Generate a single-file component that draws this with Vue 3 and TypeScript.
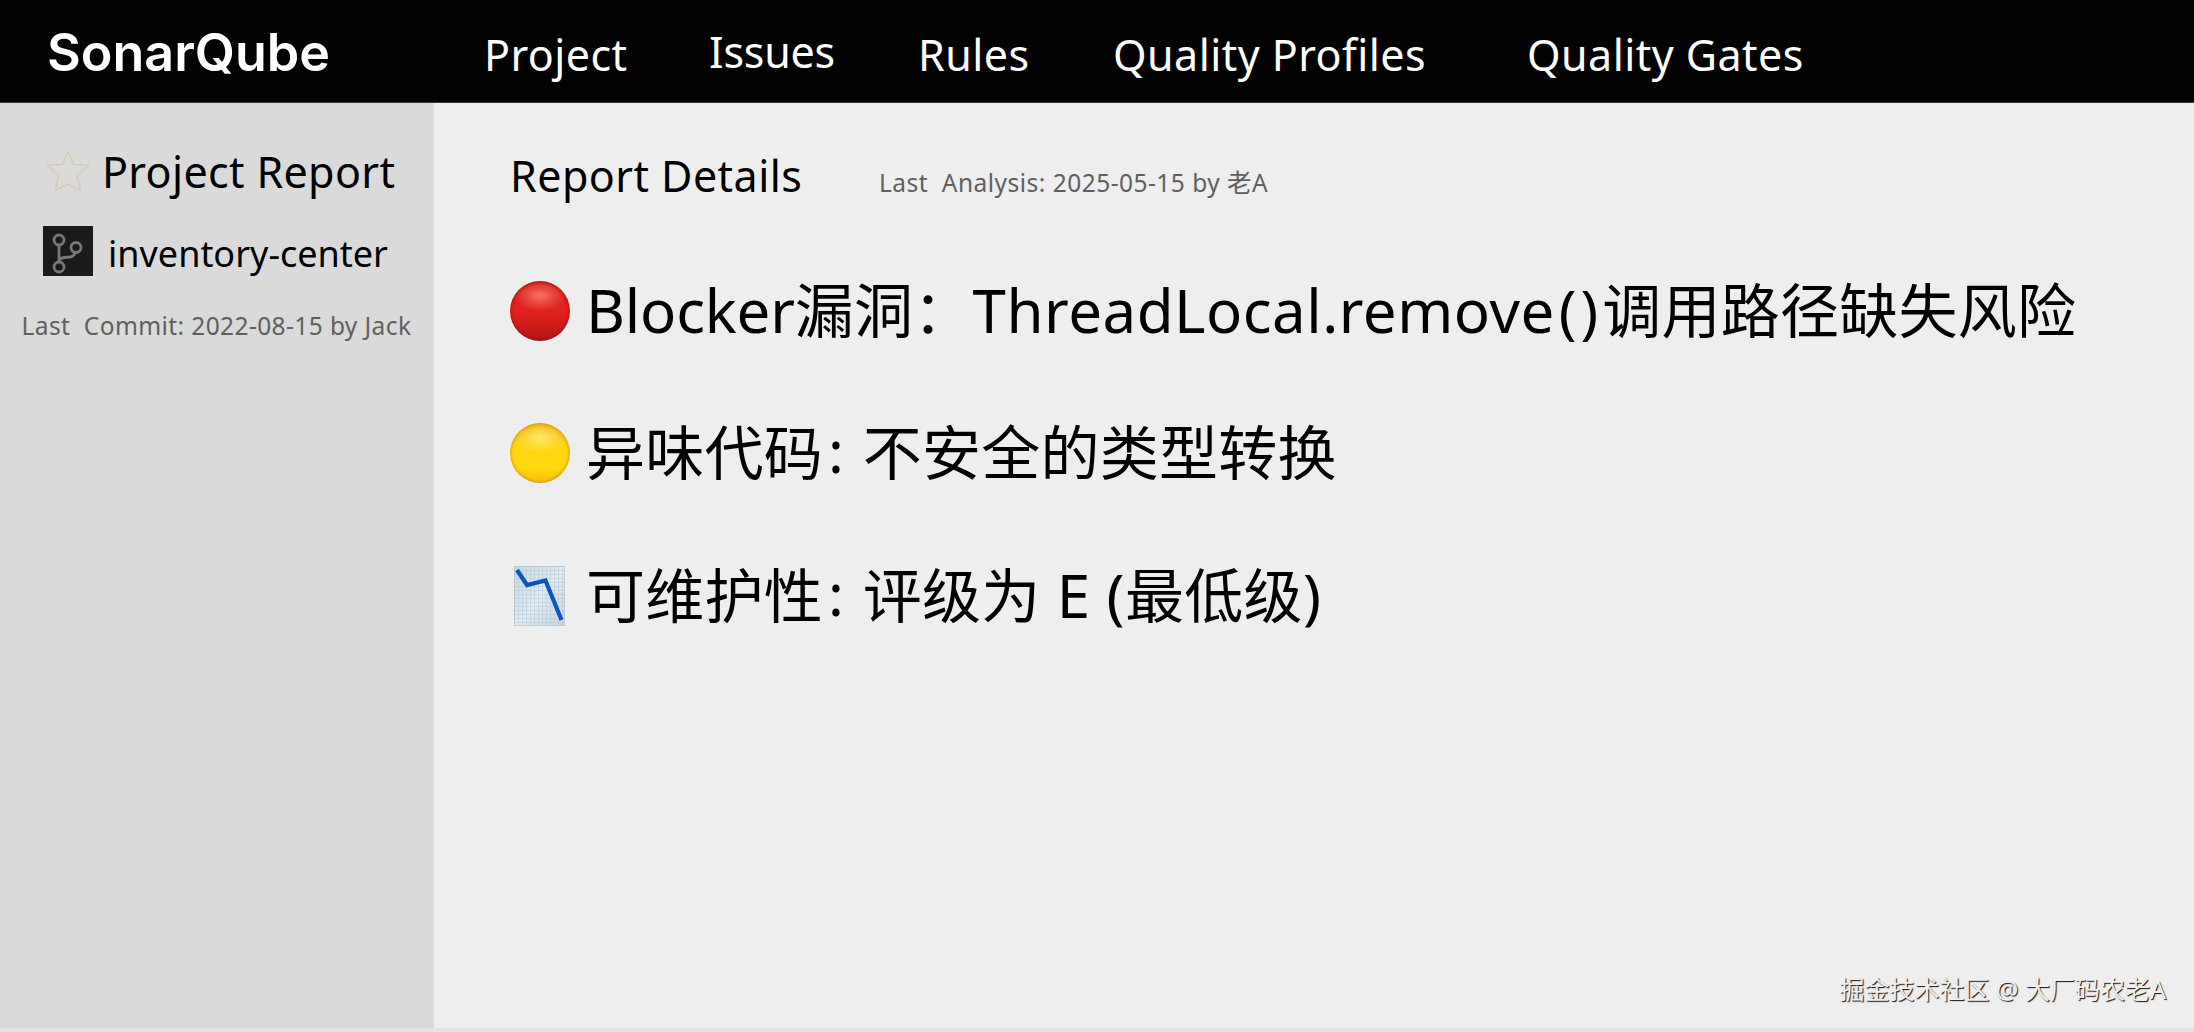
<script setup lang="ts">
import { ref } from 'vue'

interface NavItem {
  label: string
  key: string
}

interface Segment {
  kind: 'cjk' | 'latin' | 'parens' | 'colon'
  text: string
}

interface Finding {
  icon: 'red' | 'yellow' | 'chart'
  parts: Segment[]
}

const navItems: NavItem[] = [
  { key: 'project', label: 'Project' },
  { key: 'issues', label: 'Issues' },
  { key: 'rules', label: 'Rules' },
  { key: 'profiles', label: 'Quality Profiles' },
  { key: 'gates', label: 'Quality Gates' },
]

// Latin and Chinese runs are spaced differently
const findings: Finding[] = [
  {
    icon: 'red',
    parts: [
      { kind: 'latin', text: 'Blocker' },
      { kind: 'cjk', text: '漏洞：' },
      { kind: 'latin', text: 'ThreadLocal.remove' },
      { kind: 'parens', text: '()' },
      { kind: 'cjk', text: '调用路径缺失风险' },
    ],
  },
  {
    icon: 'yellow',
    parts: [
      { kind: 'cjk', text: '异味代码' },
      { kind: 'colon', text: ': ' },
      { kind: 'cjk', text: '不安全的类型转换' },
    ],
  },
  {
    icon: 'chart',
    parts: [
      { kind: 'cjk', text: '可维护性' },
      { kind: 'colon', text: ': ' },
      { kind: 'cjk', text: '评级为' },
      { kind: 'latin', text: ' E (' },
      { kind: 'cjk', text: '最低级' },
      { kind: 'latin', text: ')' },
    ],
  },
]

const active = ref('project')
</script>

<template>
  <div class="page">
    <header class="topbar">
      <div class="logo">SonarQube</div>
      <nav class="nav">
        <a
          v-for="item in navItems"
          :key="item.key"
          class="nav-item"
          :class="item.key"
          @click="active = item.key"
          ><span>{{ item.label }}</span></a
        >
      </nav>
    </header>

    <div class="body">
      <aside class="sidebar">
        <div class="side-row report">
          <svg class="star" viewBox="0 0 44 42">
            <path
              d="M22 1.5 L27.6 14.3 L43 15.4 L31.2 25.8 L34.6 40.5 L21.3 34.4 L9.6 40.5 L12.4 25.8 L1 15.4 L16.6 14.3 Z"
            />
          </svg>
          <span class="report-title">Project Report</span>
        </div>
        <div class="side-row repo">
          <svg class="branch" viewBox="0 0 50 50">
            <rect width="50" height="50" fill="#1b1b1b" />
            <g fill="none" stroke="#777" stroke-width="2.8">
              <circle cx="16" cy="14" r="5" />
              <circle cx="33" cy="21.5" r="5" />
              <circle cx="16" cy="41" r="5" />
              <path d="M16 19 V36 M16 35 Q17 32 21 31.5 L27 31 Q31 30.5 32 26.5" />
            </g>
          </svg>
          <span class="repo-name">inventory-center</span>
        </div>
        <div class="commit">Last&nbsp; Commit: 2022-08-15 by Jack</div>
      </aside>

      <main class="content">
        <div class="heading">
          <h1>Report Details</h1>
          <span class="analysis">Last&nbsp; Analysis: 2025-05-15 by 老A</span>
        </div>

        <div v-for="f in findings" :key="f.icon" class="finding" :class="'row-' + f.icon">
          <span v-if="f.icon !== 'chart'" class="ball" :class="f.icon"></span>
          <svg v-else class="chart" viewBox="0 0 51 60">
            <defs>
              <linearGradient id="paper" x1="0" y1="0" x2="1" y2="1">
                <stop offset="0" stop-color="#c3d9e5" />
                <stop offset="0.5" stop-color="#e0eaf1" />
                <stop offset="1" stop-color="#c9d5e0" />
              </linearGradient>
              <pattern id="grid" width="4" height="4" patternUnits="userSpaceOnUse">
                <path d="M0 0.5 H4 M0.5 0 V4" stroke="#a9c0cf" stroke-opacity="0.6" stroke-width="0.6" />
              </pattern>
            </defs>
            <rect width="51" height="60" rx="1" fill="url(#paper)" />
            <rect width="51" height="60" rx="1" fill="url(#grid)" stroke="#b3bcc2" />
            <path class="trend" d="M3 4 L13 19 L31.5 14.5 L47.5 54" />
          </svg>
          <span class="finding-text"
            ><span v-for="(part, i) in f.parts" :key="i" :class="part.kind">{{ part.text }}</span></span
          >
        </div>

        <div class="watermark">掘金技术社区 @ 大厂码农老A</div>
      </main>
    </div>
    <footer class="strip"></footer>
  </div>
</template>

<style>
body {
  margin: 0;
}
</style>

<style scoped>
.page {
  display: flex;
  flex-direction: column;
  width: 100%;
  height: 100vh;
  overflow: hidden;
  background: #eeeeee;
  color: #000;
  font-family: 'Noto Sans', 'Noto Sans CJK SC', sans-serif;
  white-space: nowrap;
}

.topbar {
  display: flex;
  align-items: flex-start;
  height: 102px;
  flex-shrink: 0;
  background: #020202;
  border-bottom: 1px solid #3a3a3a;
  box-sizing: content-box;
  color: #fff;
}

.logo {
  width: 437px;
  padding: 23px 0 0 47px;
  box-sizing: content-box;
  font-family: Inter, 'Liberation Sans', sans-serif;
  font-size: 52px;
  font-weight: 600;
  line-height: 60px;
}

.nav {
  display: grid;
  grid-template-columns: 225px 209px 195px 414px auto;
  padding-top: 25px;
  font-size: 43px;
  line-height: 60px;
  letter-spacing: 0.45px;
}

.nav-item {
  cursor: pointer;
}

.nav-item.issues {
  margin-top: -3px;
  letter-spacing: -0.2px;
}

.body {
  display: flex;
  flex: 1;
  min-height: 0;
}

.sidebar {
  width: 434px;
  flex-shrink: 0;
  box-sizing: border-box;
  padding-top: 38px;
  background: #dadada;
}

.side-row {
  display: flex;
  align-items: center;
}

.report {
  height: 60px;
  padding-left: 46px;
}

.star {
  width: 44px;
  height: 42px;
}

.star path {
  fill: none;
  stroke: #dac49a;
  stroke-width: 1;
}

.report-title {
  margin-left: 12px;
  padding-top: 2px;
  font-size: 43px;
  line-height: 60px;
  letter-spacing: 0.35px;
}

.repo {
  height: 50px;
  margin-top: 25px;
  padding-left: 43px;
}

.branch {
  width: 50px;
  height: 50px;
}

.repo-name {
  margin-left: 15px;
  padding-top: 6px;
  font-size: 36px;
  line-height: 50px;
}

.commit {
  margin-top: 30px;
  padding-left: 21.5px;
  color: #606060;
  font-size: 24.5px;
  line-height: 40px;
  letter-spacing: 0.4px;
}

.content {
  flex: 1;
  display: flex;
  flex-direction: column;
  align-items: flex-start;
  padding: 43px 28px 0 76px;
}

.heading {
  display: flex;
  align-items: baseline;
  height: 60px;
}

h1 {
  margin: 0;
  width: 369px;
  font-size: 43px;
  font-weight: 400;
  line-height: 60px;
  letter-spacing: 0.45px;
}

.analysis {
  color: #606060;
  font-size: 24.5px;
  line-height: 40px;
  letter-spacing: 0.48px;
}

.finding {
  display: flex;
  align-items: center;
  height: 60px;
}

.row-red {
  margin-top: 75px;
}

.row-yellow {
  margin-top: 82px;
}

.row-chart {
  margin-top: 83px;
}

.ball {
  width: 60px;
  height: 60px;
  border-radius: 50%;
}

.ball.red {
  background:
    radial-gradient(ellipse 46% 26% at 50% 24%, rgba(255, 125, 110, 0.85), rgba(255, 90, 80, 0) 100%),
    linear-gradient(#cc1a18 0%, #e3221f 45%, #d81e1b 65%, #ae1616 100%);
  box-shadow: inset 0 0 3px 1px rgba(150, 10, 10, 0.6);
}

.ball.yellow {
  background:
    radial-gradient(ellipse 46% 26% at 50% 24%, rgba(255, 238, 120, 0.85), rgba(255, 230, 80, 0) 100%),
    linear-gradient(#efae10 0%, #ffd60f 40%, #ffd90d 75%, #f3bd10 100%);
  box-shadow: inset 0 0 3px 1px rgba(205, 125, 15, 0.65);
}

.chart {
  width: 51px;
  height: 60px;
  margin: 0 5px 0 4px;
}

.trend {
  fill: none;
  stroke: #0b56bb;
  stroke-width: 4.2;
}

.finding-text {
  margin: -3px 0 0 16px;
  font-size: 59px;
  line-height: 60px;
  white-space: pre;
}

.cjk {
  letter-spacing: 0.25px;
}

.latin {
  font-size: 60px;
  letter-spacing: 0.5px;
  line-height: 1;
}

.row-red .latin:first-child {
  letter-spacing: -0.2px;
}

.colon {
  padding-left: 5px;
  letter-spacing: 1.8px;
  vertical-align: 2px;
  line-height: 1;
}

.parens {
  padding-left: 4px;
  letter-spacing: 4px;
  line-height: 1;
}

.watermark {
  margin-top: auto;
  margin-bottom: 22px;
  align-self: flex-end;
  color: #f0f0f0;
  font-size: 25px;
  line-height: 34px;
  text-shadow: 1px 1px 1px #111;
}

.strip {
  height: 4px;
  flex-shrink: 0;
  background: #e2e3e5;
}
</style>
